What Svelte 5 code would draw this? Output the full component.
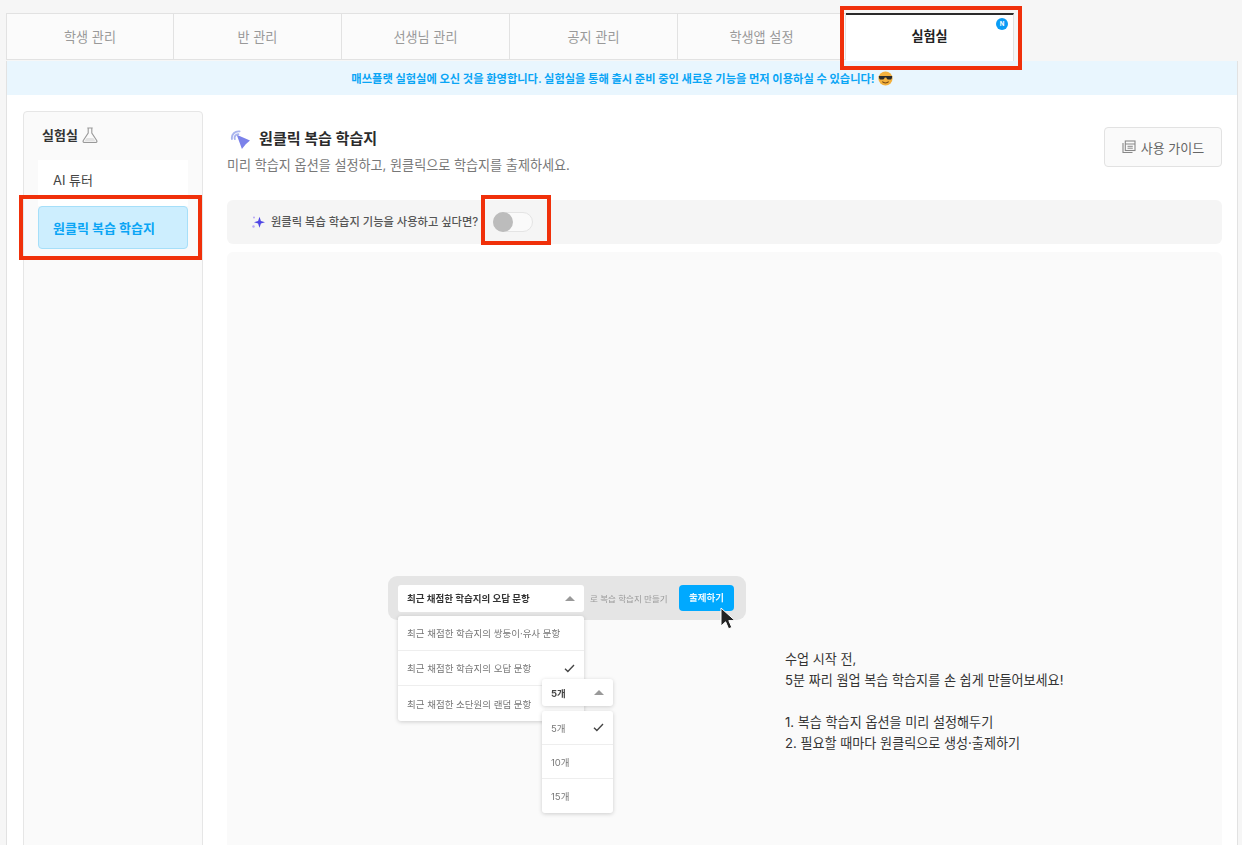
<script>
  const tabs = ['학생 관리', '반 관리', '선생님 관리', '공지 관리', '학생앱 설정'];
  const questionKinds = [
    { label: '최근 채점한 학습지의 쌍둥이·유사 문항', checked: false },
    { label: '최근 채점한 학습지의 오답 문항', checked: true },
    { label: '최근 채점한 소단원의 랜덤 문항', checked: false }
  ];
  const counts = [
    { label: '5개', checked: true },
    { label: '10개', checked: false },
    { label: '15개', checked: false }
  ];
</script>

{#snippet check()}
  <svg class="check" viewBox="0 0 12 10" width="11" height="9">
    <path d="M1 5.2 4.2 8.400 11 1.200" fill="none" stroke="#444" stroke-width="1.500" />
  </svg>
{/snippet}

<div class="page">
  <nav class="tabs">
    {#each tabs as tab}
      <div class="tab">{tab}</div>
    {/each}
    <div class="tab active">
      실험실
      <span class="new">N</span>
      <span class="mark mark-tab"></span>
    </div>
  </nav>

  <div class="panel">
    <div class="banner">
      매쓰플랫 실험실에 오신 것을 환영합니다. 실험실을 통해 출시 준비 중인 새로운 기능을 먼저 이용하실 수 있습니다!
      <svg class="emoji" viewBox="0 0 14 14" width="15" height="15">
        <circle cx="7" cy="7" r="6.600" fill="#f3b13e" />
        <path d="M.8 4.600h12.400v1.200l-.6 1.600c-.3.800-3.600.900-4.200 0L7.700 6h-1.400l-.7 1.400c-.6.900-3.900.800-4.200 0L.8 5.800z" fill="#2b2b2b" />
        <path d="M4 10c1.600 1.500 4.400 1.500 6 0" fill="none" stroke="#7a4a12" stroke-width="1" />
      </svg>
    </div>

    <div class="body">
      <aside class="side">
        <h3>
          실험실
          <svg viewBox="0 0 16 16" width="16" height="16">
            <path d="M4.600 11h6.800l2.200 3.600H2.400z" fill="#e2e2e2" />
            <path d="M5.300 1h5.400M6.200 1v5L1.300 13.500c-.6 1 0 2 1.100 2h11.200c1.100 0 1.700-1 1.100-2L9.800 6V1" fill="none" stroke="#999" stroke-width="1.100" />
          </svg>
        </h3>
        <div class="side-item">AI 튜터</div>
        <div class="side-item current">원클릭 복습 학습지</div>
        <span class="mark mark-side"></span>
      </aside>

      <main class="main">
        <header class="head">
          <div>
            <h1>
              <svg viewBox="0 0 22 20" width="21" height="19">
                <path d="M7 5 21 11 16.500 15 12.500 20z" fill="#7b82ea" />
                <path d="M2 9.500A7 7 0 0 1 10 1.500M5 9.500a3.800 3.800 0 0 1 3.800-5" fill="none" stroke="#a9b4ee" stroke-width="2" stroke-linecap="round" />
              </svg>
              원클릭 복습 학습지
            </h1>
            <p>미리 학습지 옵션을 설정하고, 원클릭으로 학습지를 출제하세요.</p>
          </div>
          <button class="guide">
            <svg viewBox="0 0 14 14" width="14" height="14">
              <path d="M1 3v9.500h9.500" fill="none" stroke="#888" stroke-width="1.100" />
              <rect x="3.300" y="1" width="9.700" height="9.500" fill="none" stroke="#888" stroke-width="1.100" />
              <path d="M3.300 4h9.700M5.500 6.300h5.300M5.500 8.200h5.300" stroke="#888" stroke-width="1" />
            </svg>
            사용 가이드
          </button>
        </header>

        <div class="toggle-bar">
          <svg viewBox="0 0 14 14" width="14" height="14">
            <path d="M8.500 1.800 9.900 6 14 7.300 9.900 8.600 8.500 12.800 7.100 8.600 3 7.300 7.100 6z" fill="#4f46e5" />
            <circle cx="3" cy="2.500" r="1" fill="#b9a8f5" />
            <circle cx="2.500" cy="11.500" r="1.200" fill="#b9a8f5" />
          </svg>
          <span>원클릭 복습 학습지 기능을 사용하고 싶다면?</span>
          <div class="switch"><i></i><span class="mark mark-switch"></span></div>
        </div>

        <section class="preview">
          <div class="illo">
            <div class="bar">
              <div class="select">
                <b>최근 채점한 학습지의 오답 문항</b>
                <i class="caret"></i>
              </div>
              <span class="make">로 복습 학습지 만들기</span>
              <div class="submit">출제하기</div>
            </div>

            <ul class="menu">
              {#each questionKinds as kind}
                <li>{kind.label}{#if kind.checked}{@render check()}{/if}</li>
              {/each}
            </ul>

            <div class="count-head"><b>5개</b><i class="caret"></i></div>
            <ul class="count-menu">
              {#each counts as count}
                <li>{count.label}{#if count.checked}{@render check()}{/if}</li>
              {/each}
            </ul>

            <svg class="pointer" viewBox="0 0 16 24" width="16" height="24">
              <path d="M1 1v18l4.600-4.200 3 7 3.200-1.400-3-6.800H15z" fill="#222" stroke="#fff" stroke-width="1" />
            </svg>
          </div>

          <div class="steps">
            <p>수업 시작 전,<br />5분 짜리 웜업 복습 학습지를 손 쉽게 만들어보세요!</p>
            <p>1. 복습 학습지 옵션을 미리 설정해두기<br />2. 필요할 때마다 원클릭으로 생성·출제하기</p>
          </div>
        </section>
      </main>
    </div>
  </div>
</div>

<style>
  :global(body) {
    margin: 0;
    background: #f6f6f6;
  }

  .page {
    height: 845px;
    overflow: hidden;
    box-sizing: border-box;
    padding: 13px 4px 0 6px;
    font-family: Inter, "Noto Sans CJK KR", sans-serif;
    color: #333;
  }

  .tabs {
    display: flex;
    height: 47px;
    position: relative;
    z-index: 1;
  }

  .tab {
    width: 168px;
    box-sizing: border-box;
    padding-bottom: 1px;
    display: flex;
    align-items: center;
    justify-content: center;
    background: #fbfbfb;
    border: 1px solid #e2e2e2;
    border-left: 0;
    font-size: 13.100px;
    color: #999;
  }

  .tab:first-child {
    border-left: 1px solid #e2e2e2;
  }

  .tab.active {
    position: relative;
    height: 48px;
    padding-bottom: 5px;
    background: #fff;
    border-top: 2px solid #2b2b2b;
    border-bottom: 0;
    color: #222;
    font-weight: 700;
  }

  .new {
    position: absolute;
    top: 3px;
    right: 5px;
    width: 12px;
    height: 12px;
    border-radius: 50%;
    background: #0a9cf5;
    color: #fff;
    font-size: 6px;
    line-height: 12px;
    text-align: center;
  }

  .mark {
    position: absolute;
    box-sizing: border-box;
    border: 4px solid #f0300a;
    pointer-events: none;
  }

  .mark-tab {
    left: -6px;
    top: -9px;
    width: 182px;
    height: 64px;
  }

  .mark-side {
    left: -5px;
    top: 83px;
    width: 183px;
    height: 65px;
  }

  .mark-switch {
    left: -13px;
    top: -18px;
    width: 70px;
    height: 50px;
  }

  .panel {
    border: 1px solid #e2e2e2;
    border-top: 0;
    background: #fff;
    height: 785px;
  }

  .banner {
    height: 34px;
    margin-top: 1px;
    display: flex;
    align-items: center;
    justify-content: center;
    gap: 3px;
    background: #e9f6fe;
    color: #0aa5f5;
    font-size: 11.250px;
    font-weight: 700;
  }

  .body {
    display: flex;
    gap: 24px;
    padding: 16px 15px 0 16px;
  }

  .side {
    position: relative;
    width: 180px;
    height: 760px;
    flex: none;
    box-sizing: border-box;
    border: 1px solid #e6e6e6;
    border-radius: 4px;
    background: #fafafa;
    padding: 13px 14px;
  }

  .side h3 {
    display: flex;
    align-items: center;
    gap: 4px;
    margin: 0 0 15px 4px;
    font-size: 13px;
    font-weight: 700;
    line-height: 20px;
    color: #333;
  }

  .side-item {
    height: 46px;
    box-sizing: border-box;
    padding: 0 0 8px 15px;
    display: flex;
    align-items: center;
    background: #fff;
    font-size: 13px;
    color: #444;
  }

  .side-item.current {
    height: 43px;
    padding: 0 0 0 14px;
    background: #cdeefe;
    border: 1px solid #a6dff9;
    border-radius: 4px;
    color: #0aa5f5;
    font-weight: 700;
  }

  .main {
    flex: 1;
    min-width: 0;
  }

  .head {
    display: flex;
    justify-content: space-between;
    align-items: flex-start;
    height: 89px;
  }

  h1 {
    display: flex;
    align-items: center;
    gap: 8px;
    margin: 16px 0 0 3px;
    font-size: 15.100px;
    font-weight: 700;
    line-height: 24px;
    color: #2b2b2b;
  }

  .head p {
    margin: 4px 0 0;
    font-size: 13.100px;
    line-height: 20px;
    color: #777;
  }

  .guide {
    display: flex;
    align-items: center;
    justify-content: center;
    gap: 5px;
    width: 118px;
    height: 40px;
    margin-top: 16px;
    border: 1px solid #e2e2e2;
    border-radius: 4px;
    background: #fafafa;
    font: inherit;
    font-size: 13px;
    color: #666;
  }

  .toggle-bar {
    display: flex;
    align-items: center;
    gap: 6px;
    height: 44px;
    padding-left: 24px;
    background: #f5f5f5;
    border-radius: 6px;
    font-size: 11.250px;
    font-weight: 500;
    color: #555;
  }

  .toggle-bar > span {
    margin-top: -2px;
  }

  .switch {
    position: relative;
    width: 40px;
    height: 20px;
    margin-left: 9px;
    box-sizing: border-box;
    border: 1px solid #e4e4e4;
    border-radius: 10px;
    background: #fafafa;
  }

  .switch i {
    position: absolute;
    left: -1px;
    top: -1px;
    width: 20px;
    height: 20px;
    border-radius: 50%;
    background: #bcbcbc;
  }

  .preview {
    display: flex;
    height: 600px;
    box-sizing: border-box;
    margin-top: 8px;
    padding: 324px 0 0 161px;
    background: #fafafa;
    border-radius: 6px;
  }

  /* the original is a scaled picture, hence the slight softness */
  .illo {
    position: relative;
    width: 358px;
    flex: none;
    font-size: 9.500px;
    color: #777;
    filter: blur(0.4px);
  }

  .bar {
    display: flex;
    align-items: center;
    height: 44px;
    box-sizing: border-box;
    padding: 0 12px 0 10px;
    border-radius: 9px;
    background: #e5e5e5;
  }

  .select {
    display: flex;
    align-items: center;
    justify-content: space-between;
    box-sizing: border-box;
    width: 186px;
    height: 27px;
    padding: 0 9px 0 9px;
    border-radius: 3px;
    background: #fff;
    color: #333;
  }

  .caret {
    width: 0;
    height: 0;
    border: 5px solid transparent;
    border-top: 0;
    border-bottom: 5px solid #999;
  }

  .make {
    margin-left: 6px;
    font-size: 8.500px;
    color: #999;
  }

  .submit {
    margin-left: auto;
    width: 55px;
    height: 26px;
    line-height: 26px;
    text-align: center;
    border-radius: 4px;
    background: #00a9ff;
    color: #e9f8ff;
    font-weight: 700;
  }

  ul {
    position: absolute;
    list-style: none;
    margin: 0;
    padding: 0;
    background: #fff;
    border-radius: 3px;
    box-shadow: 0 1px 4px rgba(0, 0, 0, 0.18);
  }

  li {
    display: flex;
    align-items: center;
    justify-content: space-between;
    border-bottom: 1px solid #eee;
    box-sizing: border-box;
  }

  li:last-child {
    border-bottom: 0;
  }

  .menu {
    left: 10px;
    top: 40px;
    width: 186px;
  }

  .menu li {
    height: 35px;
    padding: 0 9px;
  }

  .count-head {
    position: absolute;
    left: 154px;
    top: 103px;
    width: 71px;
    height: 27px;
    box-sizing: border-box;
    padding: 0 9px;
    display: flex;
    align-items: center;
    justify-content: space-between;
    background: #fff;
    border-radius: 3px;
    box-shadow: 0 1px 4px rgba(0, 0, 0, 0.18);
    color: #444;
  }

  .count-menu {
    left: 154px;
    top: 135px;
    width: 71px;
  }

  .count-menu li {
    height: 34px;
    padding: 0 9px;
  }

  .pointer {
    position: absolute;
    left: 332px;
    top: 31px;
  }

  .steps {
    margin: 73px 0 0 39px;
    font-size: 13.100px;
    line-height: 21px;
    color: #333;
  }

  .steps p {
    margin: 0 0 21px;
  }
</style>
